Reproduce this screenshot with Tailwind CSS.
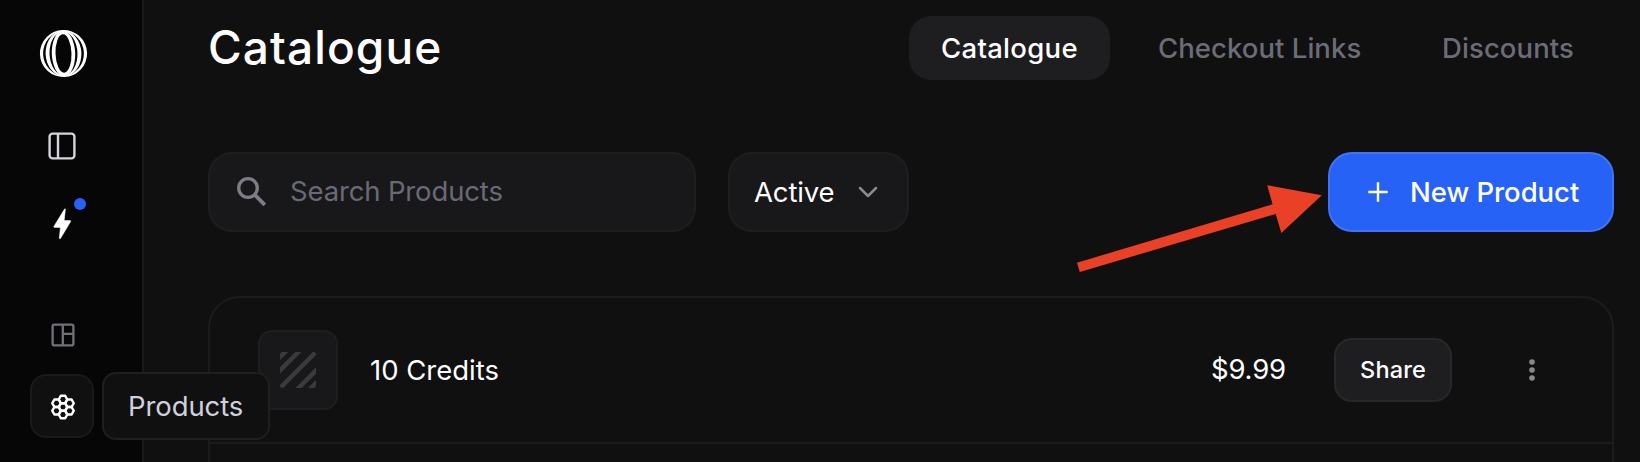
<!DOCTYPE html>
<html lang="en">
<head>
<meta charset="utf-8">
<title>Catalogue</title>
<script src="https://cdn.jsdelivr.net/npm/@tailwindcss/browser@4"></script>
</head>
<body class="h-[462px] overflow-hidden bg-[#101010] font-['Inter',sans-serif] text-[27.5px] text-white">
<div class="relative flex h-[462px] overflow-hidden">

  <aside class="relative w-36 shrink-0 border-r-2 border-[#1a1a1a] bg-[#060606]">
    <div class="flex w-[126px] flex-col items-center pt-[29px]">
      <svg class="size-[49px]" viewBox="-24.5 -24.5 49 49" fill="none">
        <g transform="rotate(-2)">
          <circle r="23.6" fill="#fff"/>
          <ellipse rx="20.4" ry="22.1" fill="#060606"/>
          <ellipse rx="17.9" ry="22.9" fill="#fff"/>
          <ellipse rx="14" ry="21.7" fill="#060606"/>
          <ellipse rx="11.7" ry="22.8" fill="#fff"/>
          <ellipse rx="8" ry="19.2" fill="#060606"/>
        </g>
      </svg>
      <svg class="mt-[54px] mr-0.5 size-7" viewBox="0 0 28 28" fill="none" stroke="#d4d4de" stroke-width="2.4">
        <rect x="1.6" y="1.6" width="24.8" height="24.8" rx="3"/>
        <path d="M10 1.6v24.8"/>
      </svg>
      <div class="relative mt-12 mr-0.5 h-8 w-5">
        <svg class="size-full" viewBox="52 208 20 32" fill="#fff" stroke="#fff" stroke-width=".5"><path d="M65.4 209.2c.2-.5-.7-.5-1 0L54 226.2c-.4.7-.2 1.2.5 1.2H60.4l-1.1 10.7c-.1.9.8 1 1.2.3l10-16.6c.4-.7.2-1.2-.5-1.2H64.2z"/></svg>
        <span class="absolute -top-2.5 left-[22px] size-3 rounded-full bg-[#2762f6]"></span>
      </div>
      <svg class="mt-[83px] size-6" viewBox="0 0 24 24" fill="none" stroke="#71717c" stroke-width="2.3">
        <rect x="1.6" y="1.6" width="20.8" height="20.8" rx="2"/>
        <path d="M11.8 1.6v20.8M11.8 10.8h10.6"/>
      </svg>
      <div class="mt-[27px] mr-0.5 flex size-16 items-center justify-center rounded-2xl border-2 border-[#1a1a1b] bg-[#101010] pt-0.5 pl-0.5">
        <svg class="size-7 shrink-0" viewBox="-14 -14 28 28" fill="none" stroke="#fff" stroke-width="2.5" stroke-linejoin="round">
          <defs><path id="cell" d="M4.3 0 2.15 3.75H-2.15L-4.3 0-2.15-3.75H2.15z"/></defs>
          <use href="#cell"/>
          <use href="#cell" y="-7.5"/><use href="#cell" y="7.5"/>
          <use href="#cell" x="-6.45" y="-3.75"/><use href="#cell" x="-6.45" y="3.75"/>
          <use href="#cell" x="6.45" y="-3.75"/><use href="#cell" x="6.45" y="3.75"/>
        </svg>
      </div>
    </div>
    <div class="absolute top-[372px] left-[102px] z-10 flex h-[68px] w-[168px] items-center rounded-[14px] border-2 border-[#1f1f20] bg-[#101010] pt-0.5 pl-6 tracking-[-0.1px] text-[#d0d1dc]">Products</div>
  </aside>

  <main class="flex flex-1 flex-col pt-4 pr-[26px] pl-16">
    <header class="flex h-16 items-center justify-between">
      <h1 class="-mt-0.5 text-[46px] font-medium tracking-[1.1px]">Catalogue</h1>
      <nav class="mr-2 flex gap-4 font-medium text-[#6c6c77]">
        <a class="flex h-16 w-[201px] items-center rounded-[22px] bg-[#1e1e20] pt-0.5 pl-8 tracking-[0.3px] text-white">Catalogue</a>
        <a class="flex h-16 w-[268px] items-center pt-0.5 pl-8 tracking-[0.05px]">Checkout Links</a>
        <a class="flex h-16 w-[196px] items-center pt-0.5 pl-8 tracking-[0.1px]">Discounts</a>
      </nav>
    </header>

    <div class="mt-[72px] flex gap-8">
      <div class="flex h-20 w-[488px] items-center rounded-3xl border-2 border-[#1e1e1f] bg-[#18181a] pl-[26px] text-[#6a6a74]">
        <svg class="size-8 shrink-0" viewBox="236 176 32 32" fill="none" stroke="#7d7d87" stroke-width="3.3">
          <circle cx="248" cy="188" r="9.3"/>
          <path d="m254.6 194.6 10.2 10.2" stroke-width="3.8"/>
        </svg>
        <span class="ml-[22px] tracking-[-0.15px]">Search Products</span>
      </div>
      <div class="flex h-20 w-[181px] items-center rounded-3xl border-2 border-[#1e1e1f] bg-[#18181a] pl-6">
        <span class="w-[104px] pt-0.5 tracking-[-0.15px]">Active</span>
        <svg class="h-3 w-5" viewBox="0 0 20 12" fill="none" stroke="#8a8a8a" stroke-width="2.5" stroke-linecap="round" stroke-linejoin="round"><path d="m2 2 8 8 8-8"/></svg>
      </div>
      <button class="ml-auto flex h-20 w-[286px] items-center rounded-3xl border-2 border-[#4074f8] bg-[#2762f6] pl-[38px] font-medium">
        <svg class="size-5" viewBox="0 0 20 20" stroke="#fff" stroke-width="2.4"><path d="M10 .3v19.4M.3 10h19.4"/></svg>
        <span class="ml-[22px] pt-0.5 tracking-[-0.05px]">New Product</span>
      </button>
    </div>

    <section class="mt-16 h-[200px] shrink-0 rounded-t-[32px] border-2 border-[#1c1c1d]">
      <div class="flex h-[146px] items-center border-b-2 border-[#1c1c1d] pl-12">
        <div class="flex size-20 items-center justify-center rounded-[14px] border-2 border-[#1e1e1f] bg-[#18181a]">
          <svg class="size-9" viewBox="0 0 36 36" stroke="#3a3a3e" stroke-width="4.5">
            <defs><clipPath id="tile"><rect width="36" height="36" rx="2.5"/></clipPath></defs>
            <g clip-path="url(#tile)"><path d="M-4 9 9-4M-3 21.5 21.5-3M15 39.5 39.5 15M27 40 40 27"/><path d="M2 34 34 2" stroke-linecap="round"/></g>
          </svg>
        </div>
        <span class="ml-[32px] pt-0.5">10 Credits</span>
        <span class="ml-auto w-[123px] tracking-[-0.2px]">$9.99</span>
        <button class="flex h-16 w-[118px] items-center rounded-[18px] border-2 border-[#28282a] bg-[#1e1e20] pl-[24px] text-[23.5px] font-medium tracking-[0.2px]">Share</button>
        <svg class="mr-[74px] ml-[74px] h-6 w-3" viewBox="0 0 12 24" fill="#8a8a8a"><circle cx="6" cy="4" r="2.8"/><circle cx="6" cy="12" r="2.8"/><circle cx="6" cy="20" r="2.8"/></svg>
      </div>
    </section>
  </main>

  <svg class="pointer-events-none absolute top-[180px] left-[1070px] h-[100px] w-[260px]" viewBox="1070 180 260 100" fill="#ea4126"><path d="M1077 262.7 1272.6 204.3 1267.2 185.2 1321.8 195.2 1281.3 233 1275.7 214 1079.8 272z"/></svg>
</div>
</body>
</html>
